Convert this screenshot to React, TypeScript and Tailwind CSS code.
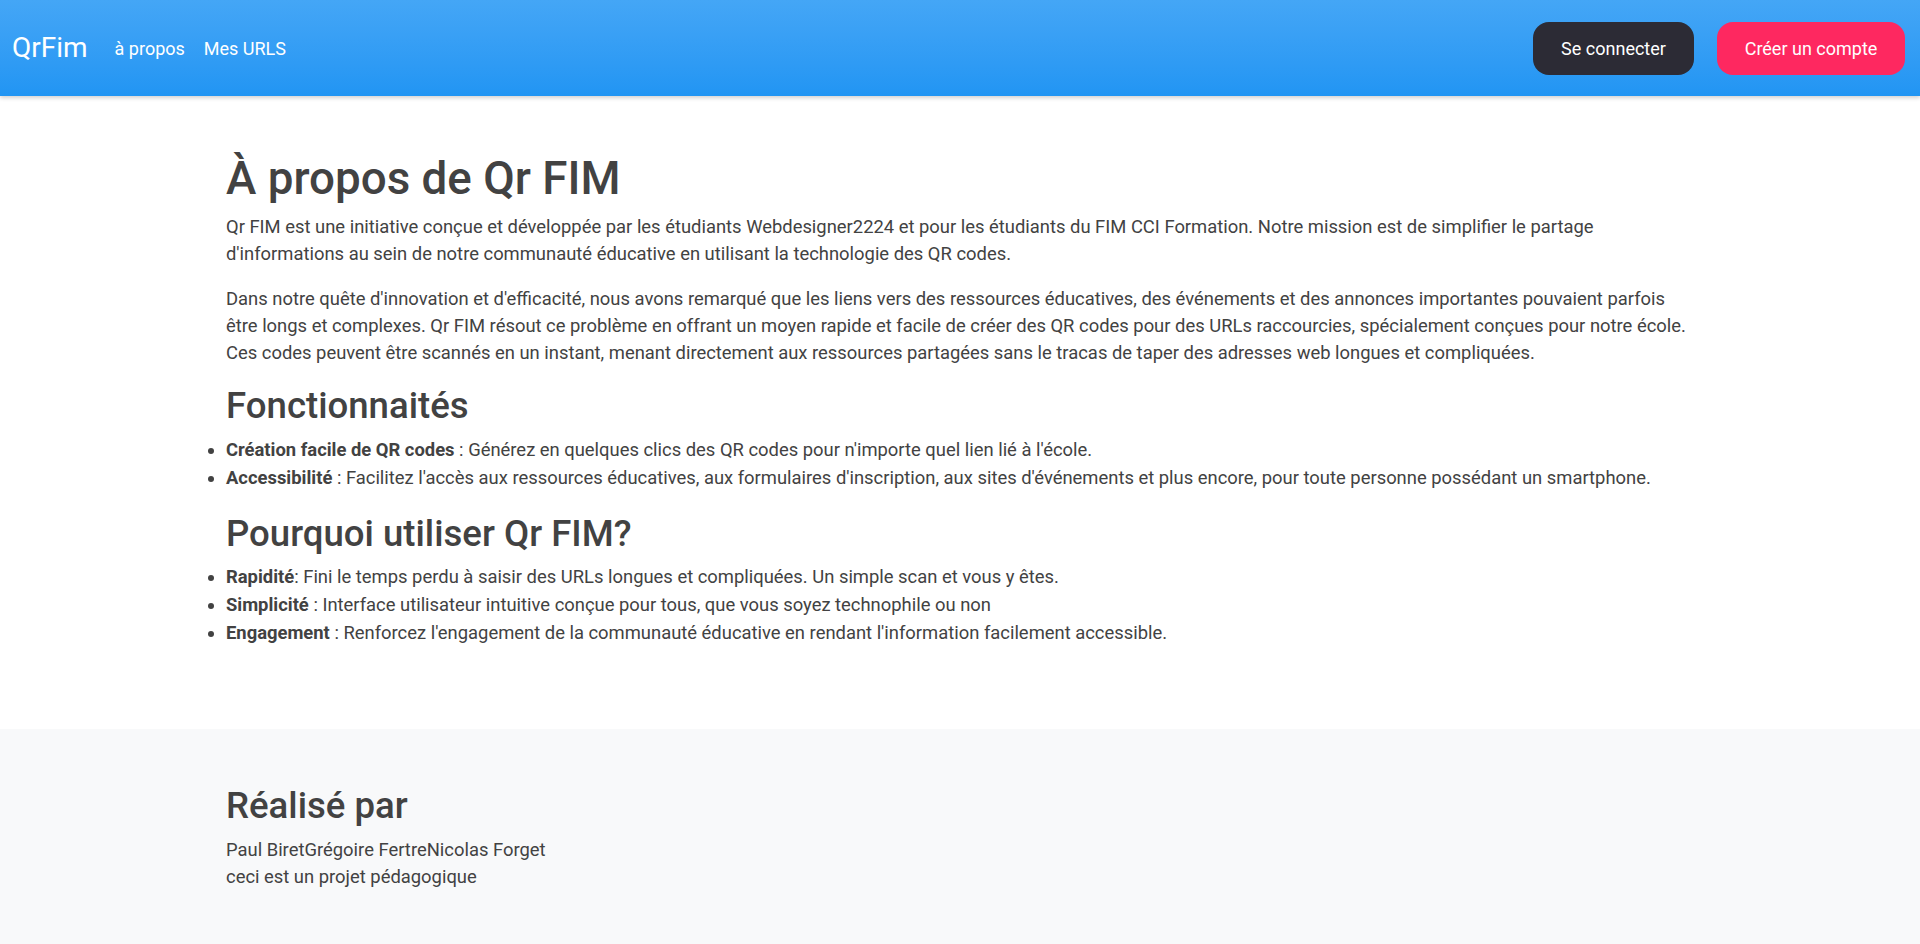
import React from 'react'

const font = { fontFamily: 'Roboto, "Noto Sans", sans-serif' }

function Header() {
  return (
    <header className="h-[96px] bg-gradient-to-b from-[#44a6f6] to-[#2195f3] shadow-[0_2px_4px_rgba(0,0,0,0.18)] relative z-10 flex items-center justify-between pl-3 pr-[15px]">
      <div className="flex items-center">
        <a className="text-[28px] text-white leading-none">QrFim</a>
        <nav className="flex items-center gap-[19px] ml-[27px] text-[18px] text-white">
          <a>à propos</a>
          <a>Mes URLS</a>
        </nav>
      </div>
      <div className="flex items-center gap-[23px]">
        <button className="h-[53px] w-[161px] rounded-2xl bg-[#2c2b35] text-white text-[18px]">
          Se connecter
        </button>
        <button className="h-[53px] w-[188px] rounded-2xl bg-[#fe2860] text-white text-[18px]">
          Créer un compte
        </button>
      </div>
    </header>
  )
}

function Item({ title, children }: { title: string; children: React.ReactNode }) {
  return (
    <li className="leading-[28px]">
      <strong className="font-bold">{title}</strong>
      {children}
    </li>
  )
}

export default function App() {
  return (
    <div style={font} className="min-h-screen bg-white text-[#424242] text-[18.4px]">
      <Header />

      <main className="max-w-[1500px] mx-auto pl-[16px] pr-[18px] pt-[56px] pb-[82px]">
        <h1 className="text-[45.75px] font-medium leading-[54px] mb-[7px]">À propos de Qr FIM</h1>
        <p className="leading-[27px] mb-[18px]">
          Qr FIM est une initiative conçue et développée par les étudiants Webdesigner2224 et pour les étudiants du FIM CCI Formation. Notre mission est de simplifier le partage d'informations au sein de notre communauté éducative en utilisant la technologie des QR codes.
        </p>
        <p className="leading-[27px] mb-[18px]">
          Dans notre quête d'innovation et d'efficacité, nous avons remarqué que les liens vers des ressources éducatives, des événements et des annonces importantes pouvaient parfois être longs et complexes. Qr FIM résout ce problème en offrant un moyen rapide et facile de créer des QR codes pour des URLs raccourcies, spécialement conçues pour notre école. Ces codes peuvent être scannés en un instant, menant directement aux ressources partagées sans le tracas de taper des adresses web longues et compliquées.
        </p>

        <h2 className="text-[36.6px] font-medium leading-[43px] mb-[9px]">Fonctionnaités</h2>
        <ul className="list-disc list-outside mb-[20px]">
          <Item title="Création facile de QR codes">
            {' '}: Générez en quelques clics des QR codes pour n'importe quel lien lié à l'école.
          </Item>
          <Item title="Accessibilité">
            {' '}: Facilitez l'accès aux ressources éducatives, aux formulaires d'inscription, aux sites d'événements et plus encore, pour toute personne possédant un smartphone.
          </Item>
        </ul>

        <h2 className="text-[36.6px] font-medium leading-[43px] mb-[8px]">Pourquoi utiliser Qr FIM?</h2>
        <ul className="list-disc list-outside">
          <Item title="Rapidité">
            : Fini le temps perdu à saisir des URLs longues et compliquées. Un simple scan et vous y êtes.
          </Item>
          <Item title="Simplicité">
            {' '}: Interface utilisateur intuitive conçue pour tous, que vous soyez technophile ou non
          </Item>
          <Item title="Engagement">
            {' '}: Renforcez l'engagement de la communauté éducative en rendant l'information facilement accessible.
          </Item>
        </ul>
      </main>

      <footer className="bg-[#f8f9fa]">
        <div className="max-w-[1500px] mx-auto pl-[16px] pr-[18px] pt-[55px] pb-[55px]">
          <h2 className="text-[36.6px] font-medium leading-[43px] mb-[9px]">Réalisé par</h2>
          <p className="leading-[27px]">
            <span>Paul Biret</span>
            <span>Grégoire Fertre</span>
            <span>Nicolas Forget</span>
          </p>
          <p className="leading-[27px]">ceci est un projet pédagogique</p>
        </div>
      </footer>
    </div>
  )
}
